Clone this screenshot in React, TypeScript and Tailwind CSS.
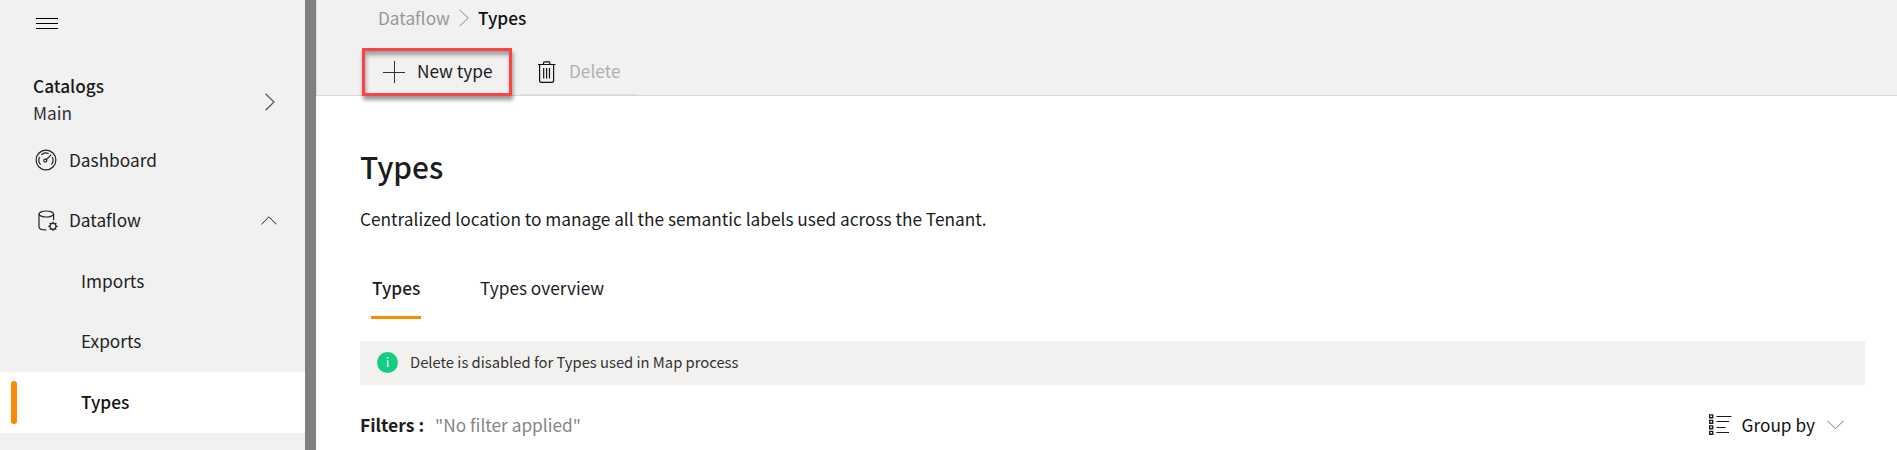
import type { ReactNode, SVGProps } from "react";

function Icon({ children, ...rest }: SVGProps<SVGSVGElement> & { children: ReactNode }) {
  return (
    <svg fill="none" stroke="currentColor" strokeWidth={1.2} {...rest}>
      {children}
    </svg>
  );
}

function MenuIcon() {
  return (
    <Icon width={22} height={12} viewBox="0 0 22 12">
      <path d="M0 .5h22M0 5.5h22M0 10.5h22" strokeWidth={1} />
    </Icon>
  );
}

function GaugeIcon() {
  return (
    <Icon width={22} height={22} viewBox="0 0 22 22">
      <circle cx="11" cy="11" r="9.9" />
      <path d="M5.6 15.6A7 7 0 0 1 4.6 7.9M6.3 5.8A7 7 0 0 1 13.7 4.5M17.3 8A7 7 0 0 1 16.4 15.6" />
      <circle cx="10.3" cy="11.6" r="1.5" />
      <path d="M11.4 10.5L16.3 5.6" />
    </Icon>
  );
}

function DatabaseIcon() {
  return (
    <Icon width={21} height={22} viewBox="0 0 21 22">
      <ellipse cx="8.3" cy="4" rx="7.3" ry="3" />
      <path d="M1 4v13c0 1.6 3 2.9 7.3 2.9M15.6 4v6" />
      <circle cx="15" cy="16.3" r="3" />
      <path d="M15 11.6v1.7M15 19.3v1.7M10.3 16.3H12M18 16.3h1.7M11.7 13l1.2 1.2M17.1 18.4l1.2 1.2M11.7 19.6l1.2-1.2M17.1 14.2l1.2-1.2" />
    </Icon>
  );
}

function TrashIcon() {
  return (
    <Icon width={18} height={22} viewBox="0 0 18 22">
      <path d="M0 3.5h17.5M5.5 3.5V2q0-1.2 1-1.2h4.4q1 0 1 1.2v1.5M1.6 3.5v16q0 1.9 1.9 1.9h10.2q1.9 0 1.9-1.9v-16M5.7 7v10.5M8.6 7v10.5M11.5 7v10.5" />
    </Icon>
  );
}

function GroupIcon() {
  return (
    <Icon width={23} height={22} viewBox="0 0 23 22">
      <path d="M.7 .9h3v2.9h-3zM.7 6.4h3v2.9h-3zM.7 11.9h3v2.9h-3zM.7 17.4h3v2.9h-3z" strokeWidth={1.4} />
      <path d="M7.5 2.5H22.5M7.5 7.5H20M7.5 13.5H16.5M7.5 18.5H20" strokeWidth={1} />
    </Icon>
  );
}

function SubItem({ label, className }: { label: string; className: string }) {
  return <a className={`flex items-center pl-[81px] ${className}`}>{label}</a>;
}

function Sidebar() {
  return (
    <aside className="flex w-[305px] shrink-0 flex-col bg-[#f1f1f1] text-[#222]">
      <div className="pt-[18px] pl-9 text-black">
        <MenuIcon />
      </div>
      <div className="mt-[43px] flex h-[57px] items-center justify-between pr-[30px] pl-[33px]">
        <div className="pb-[5px] leading-[27px]">
          <div className="font-medium text-[#1a1a1a]">Catalogs</div>
          <div className="text-[#333]">Main</div>
        </div>
        <Icon width={10} height={18} viewBox="0 0 10 18" className="text-[#555]">
          <path d="M.6 .8L9 9L.6 17.2" />
        </Icon>
      </div>
      <nav className="flex flex-col">
        <a className="flex h-[60px] items-center pl-[35px]">
          <span className="w-[34px]"><GaugeIcon /></span>
          <span className="pb-px">Dashboard</span>
        </a>
        <a className="flex h-[61px] items-center pr-[28px] pl-[38px]">
          <span className="w-[31px]"><DatabaseIcon /></span>
          <span className="grow pb-px">Dataflow</span>
          <Icon width={16} height={9} viewBox="0 0 16 9" strokeWidth={1}>
            <path d="M.4 8.4L8 .8L15.6 8.4" />
          </Icon>
        </a>
        <SubItem label="Imports" className="h-[60px]" />
        <SubItem label="Exports" className="h-[61px] pb-px" />
        <div className="flex h-[61px] items-center bg-white pl-[11px] font-medium text-[#111]">
          <span className="mr-16 h-[43px] w-1.5 rounded-full bg-[#f98b00]" />
          <span className="pb-px">Types</span>
        </div>
      </nav>
    </aside>
  );
}

export default function App() {
  return (
    <div className="flex h-[450px] w-full overflow-hidden bg-white font-['Noto_Sans_CJK_SC','Noto_Sans',sans-serif] text-[17.25px] leading-[26px] text-[#1c1c1c]">
      <Sidebar />
      <div className="w-[11px] shrink-0 bg-[#808080]" />
      <main className="flex min-w-0 grow flex-col">
        <header className="h-24 shrink-0 border-b border-l border-[#d9d9d9] bg-[#f1f1f1] pl-[45px]">
          <div className="flex h-9 items-center pl-[16px]">
            <span className="w-[81px] text-[#979797]">Dataflow</span>
            <Icon width={10} height={18} viewBox="0 0 10 18" strokeWidth={1} className="mr-[9px] text-[#888]">
              <path d="M.5 .8L9.3 9L.5 17.2" />
            </Icon>
            <span className="font-medium text-[#111]">Types</span>
          </div>
          <div className="flex h-[60px] items-start pt-[12px]">
            <button className="flex h-12 w-[150px] shrink-0 items-center border-[3px] border-[#fa4343] pl-[18px] shadow-[1px_4px_4px_rgba(0,0,0,0.4),inset_1px_4px_4px_rgba(0,0,0,0.35)]">
              <Icon width={22} height={22} viewBox="0 0 22 22" strokeWidth={1} className="mr-3 text-[#333]">
                <path d="M11.5 0v22M0 11.5h22" />
              </Icon>
              <span className="pb-[3px]">New type</span>
            </button>
            <button className="ml-2 flex h-[47px] w-[117px] items-center border-b border-[#dedede] pt-0.5 pl-[18px] text-[#b0b0b0]">
              <span className="mr-[13px] text-[#111]"><TrashIcon /></span>
              <span className="pb-[3px]">Delete</span>
            </button>
          </div>
        </header>
        <div className="flex flex-col pr-8 pl-[44px]">
          <h1 className="mt-[50px] text-[29.75px] leading-[40px] font-medium text-[#1c1c1c]">Types</h1>
          <p className="mt-[20px]">Centralized location to manage all the semantic labels used across the Tenant.</p>
          <div className="mt-[43px] flex pl-[11px]">
            <div className="h-[44px] w-[50px] border-b-[3px] border-[#fa8d00] pl-px font-medium">Types</div>
            <div className="ml-[59px]">Types overview</div>
          </div>
          <div className="mt-[22px] flex h-11 items-center bg-[#f2f1f0] pl-[17px] text-[14.75px] text-[#333]">
            <span className="mr-[12px] flex size-[21px] -translate-y-px items-center justify-center rounded-full bg-[#13ce83] text-[13px] text-white">i</span>
            <span className="pb-0.5">Delete is disabled for Types used in Map process</span>
          </div>
          <div className="mt-[27px] flex items-center">
            <span className="mr-[11px] text-[17.5px] font-bold">Filters :</span>
            <span className="text-[#858585]">"No filter applied"</span>
            <div className="mr-[21px] ml-auto flex items-center">
              <GroupIcon />
              <span className="mr-3 ml-[10px] text-[#111]">Group by</span>
              <Icon width={17} height={10} viewBox="0 0 17 10" strokeWidth={1} className="text-[#777]">
                <path d="M.4 .7L8.5 8.8L16.6 .7" />
              </Icon>
            </div>
          </div>
        </div>
      </main>
    </div>
  );
}
